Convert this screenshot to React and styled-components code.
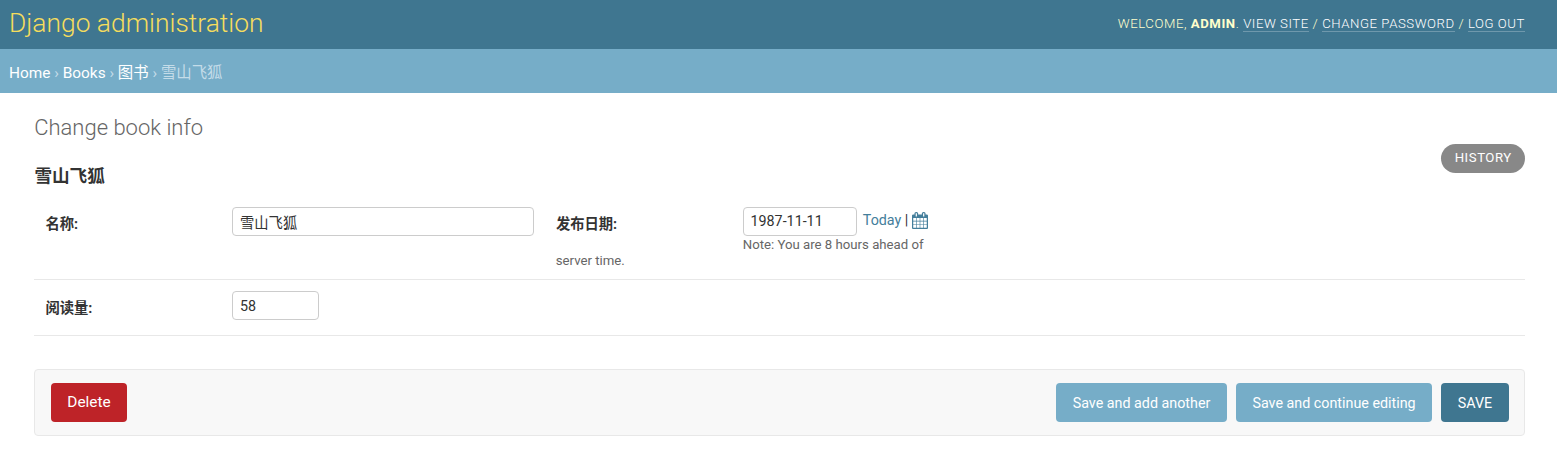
import React from "react";
import styled, { createGlobalStyle } from "styled-components";

const Global = createGlobalStyle`
  * { box-sizing: border-box; }
  body { margin: 0; background: #fff; color: #333; font: 14px Roboto, "Noto Sans CJK SC", sans-serif; }
`;
const Header = styled.header`
  display: flex; justify-content: space-between; align-items: center;
  height: 49px; padding: 0 32px 0 9px; background: #3f7690; color: #ffc;
`;
const Brand = styled.h1`
  margin: 0; padding-bottom: 3px; font-size: 26.4px; font-weight: 300; color: #f5dd5d; line-height: 32px;
`;
const UserTools = styled.div`
  padding-bottom: 2px;
  font-size: 13.2px; font-weight: 300; letter-spacing: 0.55px; text-transform: uppercase; line-height: 15px;
  strong { font-weight: 700; }
`;
const ToolLink = styled.a`
  color: #fff; border-bottom: 1px solid rgba(255, 255, 255, 0.25);
`;
const Crumbs = styled.nav`
  height: 44px; padding: 1px 9px 0; line-height: 47px; font-size: 15.4px; background: #76adc8; color: #c4dce8;
`;
const Crumb = styled.a`color: #fff;`;
const Content = styled.main`padding: 22px 32px 0 34px;`;
const Title = styled.h1`
  margin: 0; font-size: 22px; line-height: 26px; font-weight: 300; color: #666; padding-left: 0.2px;
`;
const ObjectRow = styled.div`display: flex; justify-content: space-between; height: 55px;`;
const ObjectName = styled.h2`margin: 22px 0 0; padding-left: 0.4px; font-size: 17.6px; line-height: 26px; font-weight: 700;`;
const History = styled.a`
  margin-top: 3px; width: 84px; height: 29px; padding-left: 0.5px; border-radius: 15px; background: #888; color: #fff;
  font-size: 13.2px; line-height: 27px; letter-spacing: 0.55px; text-align: center;
`;
const FormRow = styled.div`
  display: flex; height: ${(p) => p.$height}px; padding: 11px 11px 0; border-bottom: 1px solid #e8e8e8;
`;
const Field = styled.div`display: flex; flex-wrap: wrap; align-content: flex-start; width: ${(p) => p.$width}px;`;
const Label = styled.label`width: 187px; padding: 7px 0 0 0.4px; font-size: 14.3px; line-height: 21px; font-weight: 700;`;
const Input = styled.input`
  width: ${(p) => p.$width}px; height: 29px; padding: ${(p) => p.$drop || 0}px 7px ${(p) => p.$lift || 0}px; border: 1px solid #ccc; border-radius: 4px;
  background: #fff; color: #333; font: 14.3px Roboto, "Noto Sans CJK SC", sans-serif;
`;
const Shortcuts = styled.span`
  display: flex; gap: 3.5px; margin-left: 6.3px; padding-top: 4px; font-size: 14.3px; line-height: 18px; color: #333;
`;
const Today = styled.a`color: #447e9b;`;
const Note = styled.div`
  width: 375px; padding: 1px 0 0 0.3px; font-size: 13.2px; line-height: 16px; color: #666; text-indent: 187px;
`;
const SubmitRow = styled.div`
  display: flex; gap: 9px; height: 67px; margin-top: 33px; padding: 13px 15px 0 16px;
  background: #f8f8f8; border: 1px solid #e8e8e8; border-radius: 4px;
`;
const Button = styled.button`
  width: ${(p) => p.$width}px; height: 39px; padding: 1px 0 0; border: 0; border-radius: 4px;
  background: ${(p) => p.$bg}; color: #fff; font: 14.3px Roboto, sans-serif;
`;
const DeleteButton = styled(Button)`margin-right: auto; padding: 0 0 1px; font-size: 15.4px;`;
const CalendarSvg = styled.svg`display: block; flex: none; margin-top: 1px;`;

function CalendarIcon() {
  return (
    <CalendarSvg width="16" height="17" viewBox="64 0 1664 1792" preserveAspectRatio="none" fill="#447e9b">
      <path d="M192 1664h288v-288h-288v288zm352 0h320v-288h-320v288zm-352-352h288v-320h-288v320zm352 0h320v-320h-320v320zm-352-384h288v-288h-288v288zm736 736h320v-288h-320v288zm-384-736h320v-288h-320v288zm768 736h288v-288h-288v288zm-384-352h320v-320h-320v320zm-352-864v-288q0-13-9.500-22.500t-22.500-9.500h-64q-13 0-22.500 9.500t-9.500 22.500v288q0 13 9.500 22.500t22.500 9.500h64q13 0 22.500-9.500t9.500-22.500zm736 864h288v-320h-288v320zm-384-384h320v-288h-320v288zm384 0h288v-288h-288v288zm32-480v-288q0-13-9.500-22.500t-22.500-9.500h-64q-13 0-22.500 9.500t-9.500 22.500v288q0 13 9.500 22.500t22.500 9.500h64q13 0 22.500-9.500t9.500-22.500zm384-64v1280q0 52-38 90t-90 38h-1408q-52 0-90-38t-38-90v-1280q0-52 38-90t90-38h128v-96q0-66 47-113t113-47h64q66 0 113 47t47 113v96h384v-96q0-66 47-113t113-47h64q66 0 113 47t47 113v96h128q52 0 90 38t38 90z" />
    </CalendarSvg>
  );
}

export default function App() {
  return (
    <>
      <Global />
      <Header>
        <Brand>Django administration</Brand>
        <UserTools>
          Welcome, <strong>admin</strong>. <ToolLink>View site</ToolLink> / <ToolLink>Change password</ToolLink> / <ToolLink>Log out</ToolLink>
        </UserTools>
      </Header>
      <Crumbs>
        <Crumb>Home</Crumb> › <Crumb>Books</Crumb> › <Crumb>图书</Crumb> › 雪山飞狐
      </Crumbs>
      <Content>
        <Title>Change book info</Title>
        <ObjectRow>
          <ObjectName>雪山飞狐</ObjectName>
          <History>HISTORY</History>
        </ObjectRow>
        <FormRow $height={84}>
          <Field $width={510.5}>
            <Label>名称:</Label>
            <Input $width={302} defaultValue="雪山飞狐" />
          </Field>
          <Field $width={400}>
            <Label>发布日期:</Label>
            <Input $width={114} $lift={1} defaultValue="1987-11-11" />
            <Shortcuts><Today>Today</Today>|<CalendarIcon /></Shortcuts>
            <Note>Note: You are 8 hours ahead of server time.</Note>
          </Field>
        </FormRow>
        <FormRow $height={56}>
          <Field $width={511}>
            <Label>阅读量:</Label>
            <Input $width={87} $drop={1} defaultValue="58" />
          </Field>
        </FormRow>
        <SubmitRow>
          <DeleteButton $width={76} $bg="#be2328">Delete</DeleteButton>
          <Button $width={171} $bg="#76adc8">Save and add another</Button>
          <Button $width={196} $bg="#76adc8">Save and continue editing</Button>
          <Button $width={68} $bg="#3f7690">SAVE</Button>
        </SubmitRow>
      </Content>
    </>
  );
}
